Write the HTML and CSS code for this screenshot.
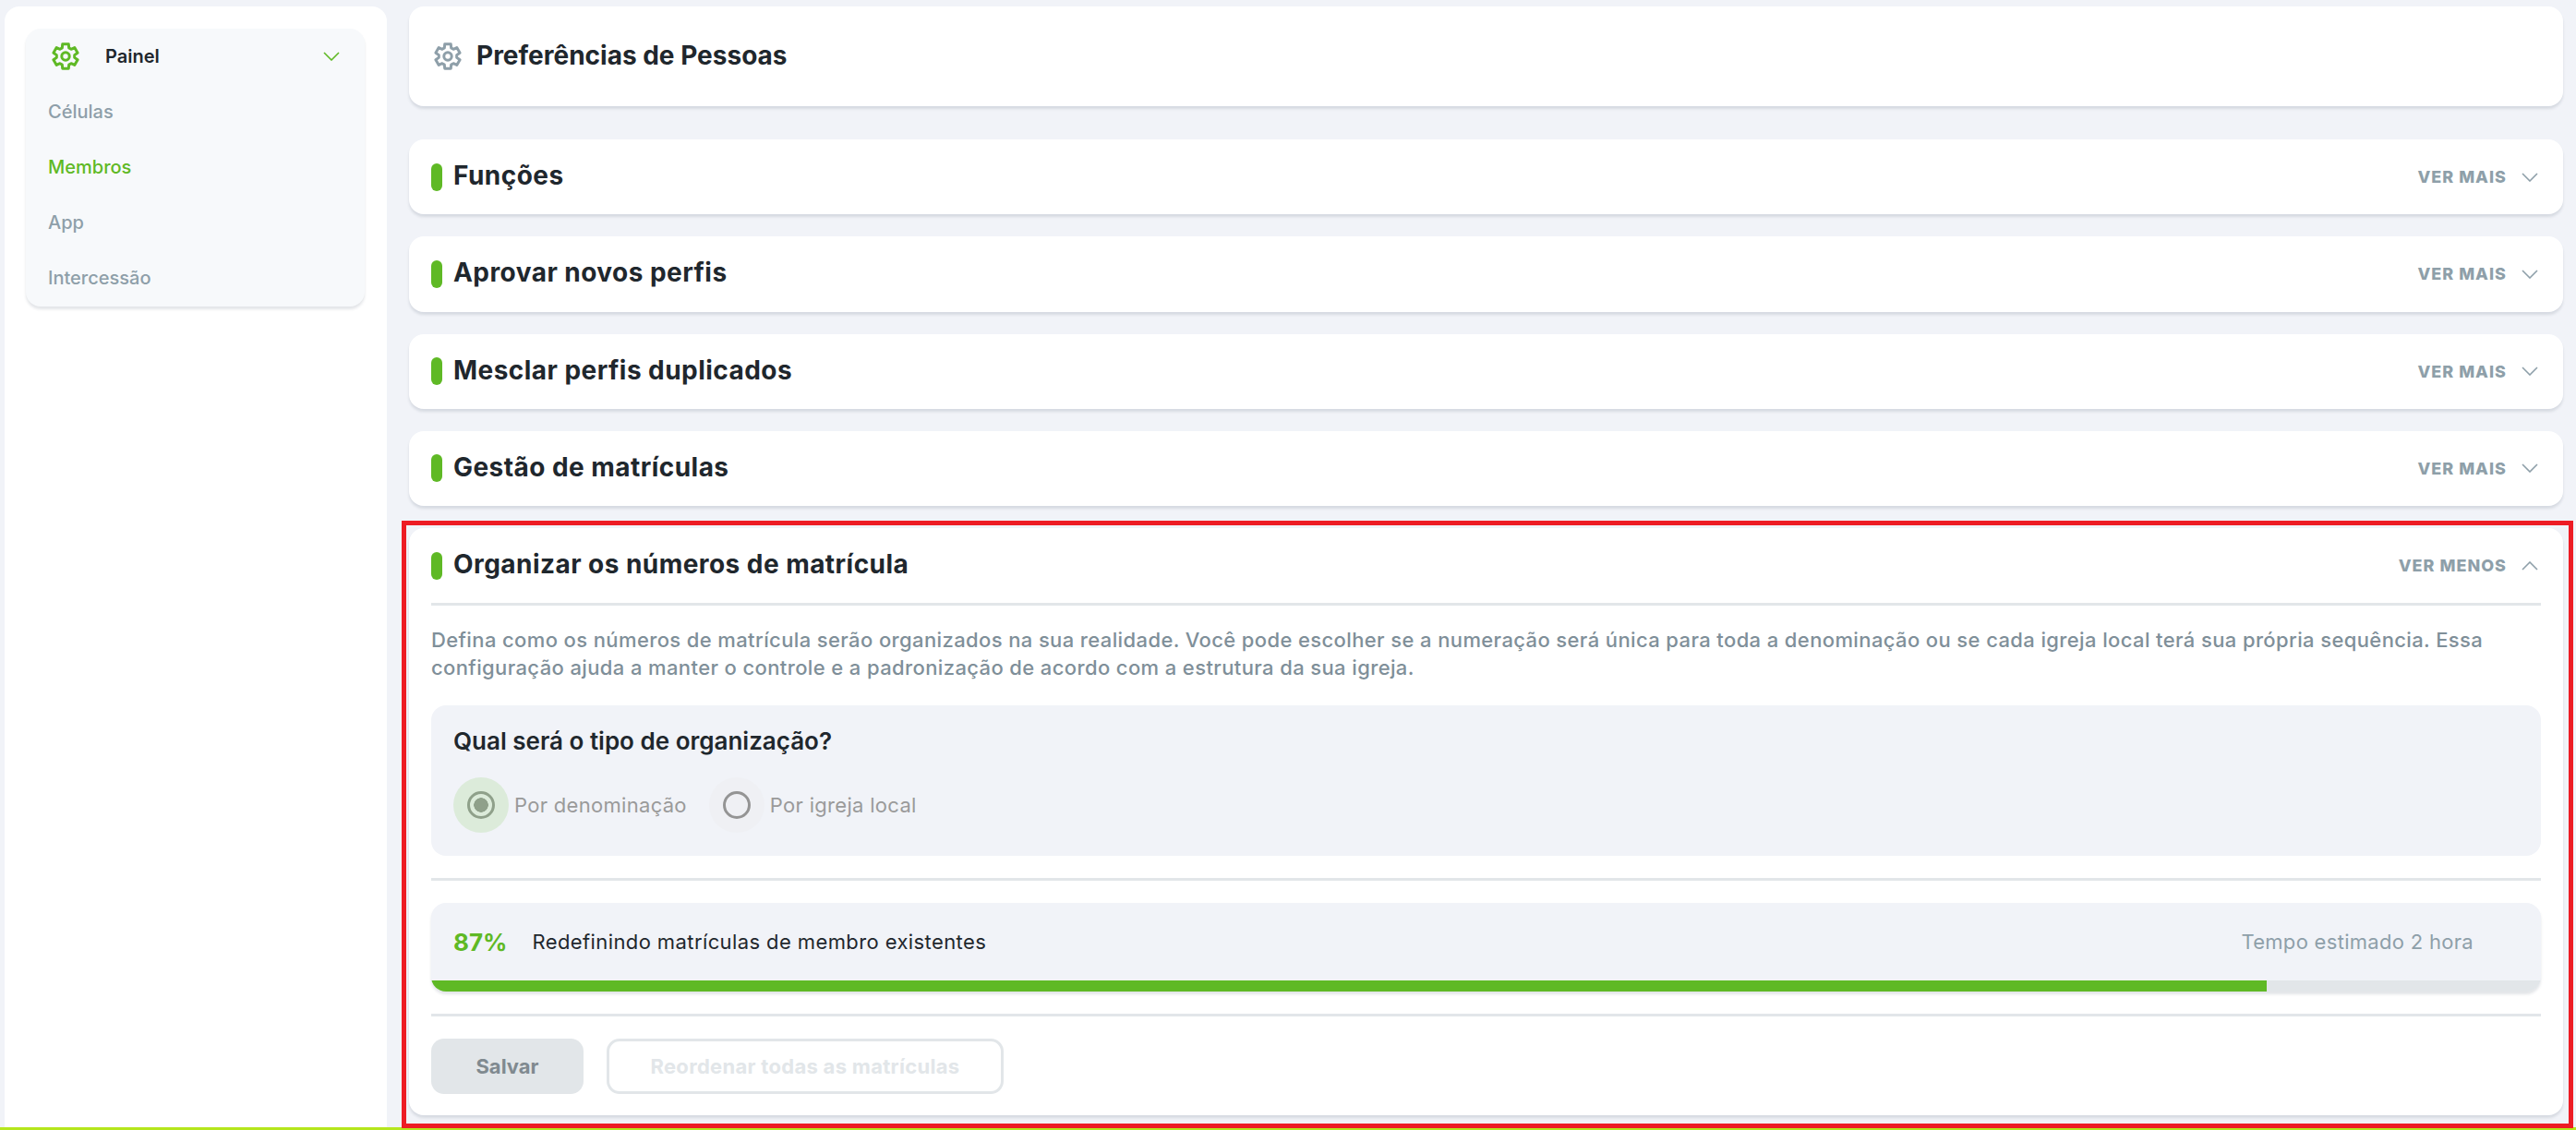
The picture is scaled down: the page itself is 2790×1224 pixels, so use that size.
FILE: index.html
```html
<!DOCTYPE html>
<html lang="pt-BR">
  <head>
    <meta charset="UTF-8" />
    <meta name="viewport" content="width=device-width, initial-scale=1.0" />
    <title>Preferências de Pessoas</title>
    <link rel="stylesheet" href="styles.css">
  </head>
  <body>
    <svg class="iconDefs" width="0" height="0" aria-hidden="true">
      <symbol id="gear" viewBox="0 0 30 30">
        <path fill="none" stroke="currentColor" stroke-width="3" stroke-linejoin="round" d="M11.71 1.8L18.29 1.8L18.67 5.91L21.03 7.28L24.78 5.55L28.07 11.25L24.7 13.64L24.7 16.36L28.07 18.75L24.78 24.45L21.03 22.72L18.67 24.09L18.29 28.2L11.71 28.2L11.33 24.09L8.97 22.72L5.22 24.45L1.93 18.75L5.3 16.36L5.3 13.64L1.93 11.25L5.22 5.55L8.97 7.28L11.33 5.91Z"/>
        <circle cx="15" cy="15" r="4.2" fill="none" stroke="currentColor" stroke-width="3"/>
      </symbol>
    </svg>
    <div class="app">
      <aside class="sidebar">
        <nav class="menu">
          <div class="menuHead">
            <svg class="menuGear"><use href="#gear"/></svg>
            <span class="menuTitle">Painel</span>
            <svg class="menuChevron" viewBox="0 0 18 10"><path d="M1 1l8 8 8-8"/></svg>
          </div>
          <a class="menuItem">Células</a>
          <a class="menuItem active">Membros</a>
          <a class="menuItem">App</a>
          <a class="menuItem">Intercessão</a>
        </nav>
      </aside>
      <main class="content">
        <header class="card pageHead">
          <svg class="pageGear"><use href="#gear"/></svg>
          <h1>Preferências de Pessoas</h1>
        </header>
        <section class="card">
          <div class="cardHead">
            <span class="mark"></span><h2>Funções</h2>
            <span class="toggle">VER MAIS</span>
            <svg class="chevron" viewBox="0 0 18 10"><path d="M1 1l8 8 8-8"/></svg>
          </div>
        </section>
        <section class="card">
          <div class="cardHead">
            <span class="mark"></span><h2>Aprovar novos perfis</h2>
            <span class="toggle">VER MAIS</span>
            <svg class="chevron" viewBox="0 0 18 10"><path d="M1 1l8 8 8-8"/></svg>
          </div>
        </section>
        <section class="card">
          <div class="cardHead">
            <span class="mark"></span><h2>Mesclar perfis duplicados</h2>
            <span class="toggle">VER MAIS</span>
            <svg class="chevron" viewBox="0 0 18 10"><path d="M1 1l8 8 8-8"/></svg>
          </div>
        </section>
        <section class="card">
          <div class="cardHead">
            <span class="mark"></span><h2>Gestão de matrículas</h2>
            <span class="toggle">VER MAIS</span>
            <svg class="chevron" viewBox="0 0 18 10"><path d="M1 1l8 8 8-8"/></svg>
          </div>
        </section>
        <section class="card open">
          <div class="cardHead">
            <span class="mark"></span><h2>Organizar os números de matrícula</h2>
            <span class="toggle">VER MENOS</span>
            <svg class="chevron" viewBox="0 0 18 10"><path d="M1 9l8-8 8 8"/></svg>
          </div>
          <p class="intro">Defina como os números de matrícula serão organizados na sua realidade. Você pode escolher se a numeração será única para toda a denominação ou se cada igreja local terá sua própria sequência. Essa configuração ajuda a manter o controle e a padronização de acordo com a estrutura da sua igreja.</p>
          <div class="panel question">
            <h3>Qual será o tipo de organização?</h3>
            <div class="radios">
              <label class="radio checked"><span class="halo"><span class="dot"></span></span>Por denominação</label>
              <label class="radio"><span class="halo"><span class="dot"></span></span>Por igreja local</label>
            </div>
          </div>
          <hr class="rule">
          <div class="panel progress">
            <div class="progressRow">
              <span class="percent">87%</span>
              <span class="progressText">Redefinindo matrículas de membro existentes</span>
              <span class="estimate">Tempo estimado 2 hora</span>
            </div>
            <div class="track"><div class="fill" style="width: 87%"></div></div>
          </div>
          <hr class="rule">
          <div class="actions">
            <button class="btn btnSave">Salvar</button>
            <button class="btn btnGhost">Reordenar todas as matrículas</button>
          </div>
        </section>
      </main>
    </div>
    <div class="bottomLine"></div>
    <div class="highlight"></div>
  </body>
</html>
```
FILE: styles.css
```css
html, body {
  margin: 0;
  height: 1224px;
  overflow: hidden;
}
body {
  display: flex;
  flex-direction: column;
  background: #f1f3f8;
  font-family: 'Inter', 'Liberation Sans', sans-serif;
  color: #1f272d;
}
.iconDefs {
  position: absolute;
}
.app {
  flex: 1;
  display: flex;
  min-height: 0;
  padding: 7px 14px 0 5px;
  gap: 24px;
}
.bottomLine {
  height: 3px;
  background: #b5e61d;
}

/* sidebar */
.sidebar {
  width: 414px;
  flex: none;
  box-sizing: border-box;
  padding: 24px 24px 0 23px;
  background: #fff;
  border-radius: 16px 16px 0 0;
}
.menu {
  height: 301px;
  background: #f7f9fb;
  border-radius: 16px;
  box-shadow: 0 3px 3px rgba(60, 70, 90, 0.14);
}
.menuHead {
  display: flex;
  align-items: center;
  height: 59.5px;
  padding: 0 27px 0 28px;
}
.menuGear {
  width: 30px;
  height: 30px;
  color: #5fb925;
}
.menuTitle {
  margin-left: 28px;
  font-size: 20px;
  font-weight: 600;
}
.menuChevron {
  margin-left: auto;
  width: 18px;
  height: 10px;
  fill: none;
  stroke: #5fb925;
  stroke-width: 1.6;
}
.menuItem {
  display: block;
  height: 60px;
  line-height: 60px;
  padding-left: 24px;
  font-size: 20px;
  font-weight: 500;
  color: #8e9fa9;
}
.menuItem.active {
  color: #5fb925;
}

/* cards */
.content {
  flex: 1;
  min-width: 0;
  display: flex;
  flex-direction: column;
  gap: 24px;
}
.card {
  background: #fff;
  border-radius: 16px;
  box-shadow: 0 3px 3px rgba(60, 70, 90, 0.14);
  padding: 0 24px;
}
.pageHead {
  display: flex;
  align-items: center;
  height: 108px;
  margin-bottom: 12px;
  box-sizing: border-box;
  padding-left: 27px;
}
.pageGear {
  width: 30px;
  height: 30px;
  color: #8e9fa9;
}
h1 {
  margin: 0 0 2px 16px;
  font-size: 28px;
  font-weight: 700;
}
.cardHead {
  display: flex;
  align-items: center;
  height: 81.25px;
}
.mark {
  width: 12px;
  height: 30px;
  border-radius: 6px;
  background: #5fb925;
  margin-right: 12px;
}
h2 {
  margin: 0 0 3px;
  font-size: 28px;
  font-weight: 700;
  letter-spacing: 0.45px;
}
.toggle {
  margin-left: auto;
  font-size: 18px;
  font-weight: 800;
  letter-spacing: 1px;
  color: #8e9fa9;
}
.chevron {
  width: 18px;
  height: 10px;
  margin: 0 3px 0 16px;
  fill: none;
  stroke: #8e9fa9;
  stroke-width: 1.6;
}

/* open card */
.open {
  height: 636px;
  box-sizing: border-box;
}
.open .cardHead {
  border-bottom: 3px solid #e2e6e9;
}
.intro {
  margin: 22px 0 26px;
  font-size: 22px;
  line-height: 30px;
  font-weight: 500;
  letter-spacing: 0.38px;
  color: #7f8f99;
}
.panel {
  background: #f1f3f8;
  border-radius: 16px;
}
.question {
  height: 163px;
  box-sizing: border-box;
  padding: 24px 24px 0;
}
h3 {
  margin: 0 0 24px;
  font-size: 26px;
  line-height: 30px;
  font-weight: 600;
}
.radios {
  display: flex;
  gap: 24px;
}
.radio {
  display: flex;
  align-items: center;
  gap: 6px;
  font-size: 22px;
  letter-spacing: 0.3px;
  color: #9a9a9a;
}
.halo {
  width: 60px;
  height: 60px;
  display: flex;
  align-items: center;
  justify-content: center;
  border-radius: 50%;
  background: #eff0f4;
}
.dot {
  width: 30px;
  height: 30px;
  box-sizing: border-box;
  border: 3px solid #949494;
  border-radius: 50%;
}
.checked .halo {
  background: #dcebda;
}
.checked .dot {
  border-color: #8fa08a;
  background: radial-gradient(circle, #8fa08a 0 7.5px, transparent 8px);
}
.rule {
  height: 3px;
  margin: 24px 0;
  border: 0;
  background: #e2e6e9;
}
.progress {
  height: 96px;
  display: flex;
  flex-direction: column;
  overflow: hidden;
  box-shadow: 0 3px 3px rgba(60, 70, 90, 0.14);
}
.progressRow {
  flex: 1;
  display: flex;
  align-items: center;
  padding: 0 73px 0 24px;
}
.percent {
  font-size: 26px;
  font-weight: 700;
  color: #5fb925;
}
.progressText {
  margin-left: 27px;
  font-size: 22px;
  letter-spacing: 0.4px;
  color: #1f272d;
}
.estimate {
  margin-left: auto;
  font-size: 22px;
  letter-spacing: 0.3px;
  color: #8e9fa9;
}
.track {
  height: 12px;
  background: #e2e6e9;
}
.fill {
  height: 100%;
  background: #5fb925;
}
.actions {
  display: flex;
  gap: 25px;
}
.btn {
  height: 60px;
  border-radius: 14px;
  font-family: inherit;
  font-size: 22px;
  font-weight: 700;
}
.btnSave {
  width: 165px;
  border: 0;
  background: #e2e6e9;
  color: #808a90;
}
.btnGhost {
  width: 430px;
  border: 3px solid #e2e6e9;
  background: #fff;
  letter-spacing: 0.3px;
  color: #e2e6e9;
}

/* red annotation over the open card */
.highlight {
  position: absolute;
  left: 435px;
  top: 564px;
  width: 2352px;
  height: 658px;
  box-sizing: border-box;
  border: 5px solid #ed1c24;
}
```
